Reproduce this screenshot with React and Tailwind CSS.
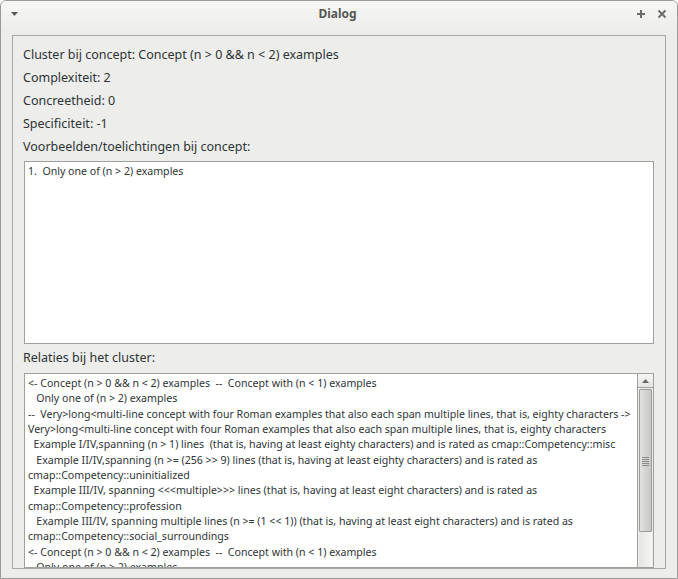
import React from 'react';

const relationLines = [
  '<- Concept (n > 0 && n < 2) examples  --  Concept with (n < 1) examples',
  '   Only one of (n > 2) examples',
  '--  Very>long<multi-line concept with four Roman examples that also each span multiple lines, that is, eighty characters ->',
  'Very>long<multi-line concept with four Roman examples that also each span multiple lines, that is, eighty characters',
  '  Example I/IV,spanning (n > 1) lines  (that is, having at least eighty characters) and is rated as cmap::Competency::misc',
  '   Example II/IV,spanning (n >= (256 >> 9) lines (that is, having at least eighty characters) and is rated as',
  'cmap::Competency::uninitialized',
  '  Example III/IV, spanning <<<multiple>>> lines (that is, having at least eight characters) and is rated as',
  'cmap::Competency::profession',
  '   Example III/IV, spanning multiple lines (n >= (1 << 1)) (that is, having at least eight characters) and is rated as',
  'cmap::Competency::social_surroundings',
  '<- Concept (n > 0 && n < 2) examples  --  Concept with (n < 1) examples',
  '   Only one of (n > 2) examples',
];

const TitleBar = () => (
  <div className="h-[28px] flex items-center justify-between px-[8px] pb-[2px] bg-gradient-to-b from-[#f7f7f6] to-[#ededeb] shrink-0">
    <svg width="9" height="6" viewBox="0 0 9 6" className="ml-[1px]">
      <path d="M1 1 L8 1 L4.5 5 Z" fill="#5a5a5a" />
    </svg>
    <span className="text-[12px] font-bold text-[#555753] pl-[20px]">Dialog</span>
    <div className="flex items-center gap-[11px] pr-[2px]">
      <svg width="10" height="10" viewBox="0 0 10 10">
        <path d="M5 1 V9 M1 5 H9" stroke="#6a6a6a" strokeWidth="2" />
      </svg>
      <svg width="10" height="10" viewBox="0 0 10 10">
        <path d="M1.5 1.5 L8.5 8.5 M8.5 1.5 L1.5 8.5" stroke="#6a6a6a" strokeWidth="1.8" />
      </svg>
    </div>
  </div>
);

const ScrollBar = () => (
  <div className="w-[16px] shrink-0 flex flex-col border-l border-[#a0a09c] bg-[#ededeb]">
    <div className="h-[14px] flex items-center justify-center bg-gradient-to-b from-[#f6f6f5] to-[#e4e4e2] border-b border-[#a0a09c]">
      <svg width="7" height="4" viewBox="0 0 7 4">
        <path d="M0 4 L3.5 0 L7 4 Z" fill="#6a6a6a" />
      </svg>
    </div>
    <div className="mt-[1px] h-[143px] mx-[1px] rounded-[1px] border border-[#9c9c98] bg-gradient-to-r from-[#e2e2e0] via-[#d4d4d2] to-[#c8c8c6] flex flex-col items-center justify-center">
      <div className="flex flex-col gap-[1px] mt-[2px]">
        <div className="w-[7px] h-[1px] bg-[#8a8a88]" />
        <div className="w-[7px] h-[1px] bg-[#8a8a88]" />
        <div className="w-[7px] h-[1px] bg-[#8a8a88]" />
        <div className="w-[7px] h-[1px] bg-[#8a8a88]" />
        <div className="w-[7px] h-[1px] bg-[#8a8a88]" />
      </div>
    </div>
    <div className="flex-1 mx-[1px] bg-gradient-to-r from-[#e6e6e4] to-[#f4f4f3]" />
  </div>
);

export default function App() {
  return (
    <div
      className="w-[678px] h-[579px] bg-[#ededeb] border border-[#9a9a98] rounded-t-[6px] overflow-hidden flex flex-col text-[#2e3436]"
      style={{ fontFamily: '"Noto Sans", "Open Sans", sans-serif' }}
    >
      <TitleBar />
      <div className="flex-1 min-h-0 px-[11px] pt-[6px] pb-[9px] flex flex-col">
        <div className="flex-1 border border-[#a8a8a4] flex flex-col px-[11px] pt-[7px] min-h-0 overflow-hidden">
          <div className="text-[12.5px] leading-[23px] -ml-[1px]">
            <div>Cluster bij concept: Concept (n &gt; 0 &amp;&amp; n &lt; 2) examples</div>
            <div>Complexiteit: 2</div>
            <div>Concreetheid: 0</div>
            <div>Specificiteit: -1</div>
            <div>Voorbeelden/toelichtingen bij concept:</div>
          </div>
          <div className="mt-[3px] h-[183px] shrink-0 bg-white border border-[#a0a09c] pl-[3px] pt-[2px] text-[10.6px] leading-[15px] whitespace-pre">
            1.  Only one of (n &gt; 2) examples
          </div>
          <div className="mt-[2px] mb-[4px] text-[12.5px] leading-[23px] -ml-[1px]">Relaties bij het cluster:</div>
          <div className="flex-1 min-h-0 bg-white border border-[#a0a09c] flex overflow-hidden">
            <div className="flex-1 min-w-0 overflow-hidden pl-[3px] pt-[2px] text-[10.6px] leading-[15.33px]">
              {relationLines.map((line, i) => (
                <div key={i} className="whitespace-pre">{line}</div>
              ))}
            </div>
            <ScrollBar />
          </div>
        </div>
      </div>
    </div>
  );
}
